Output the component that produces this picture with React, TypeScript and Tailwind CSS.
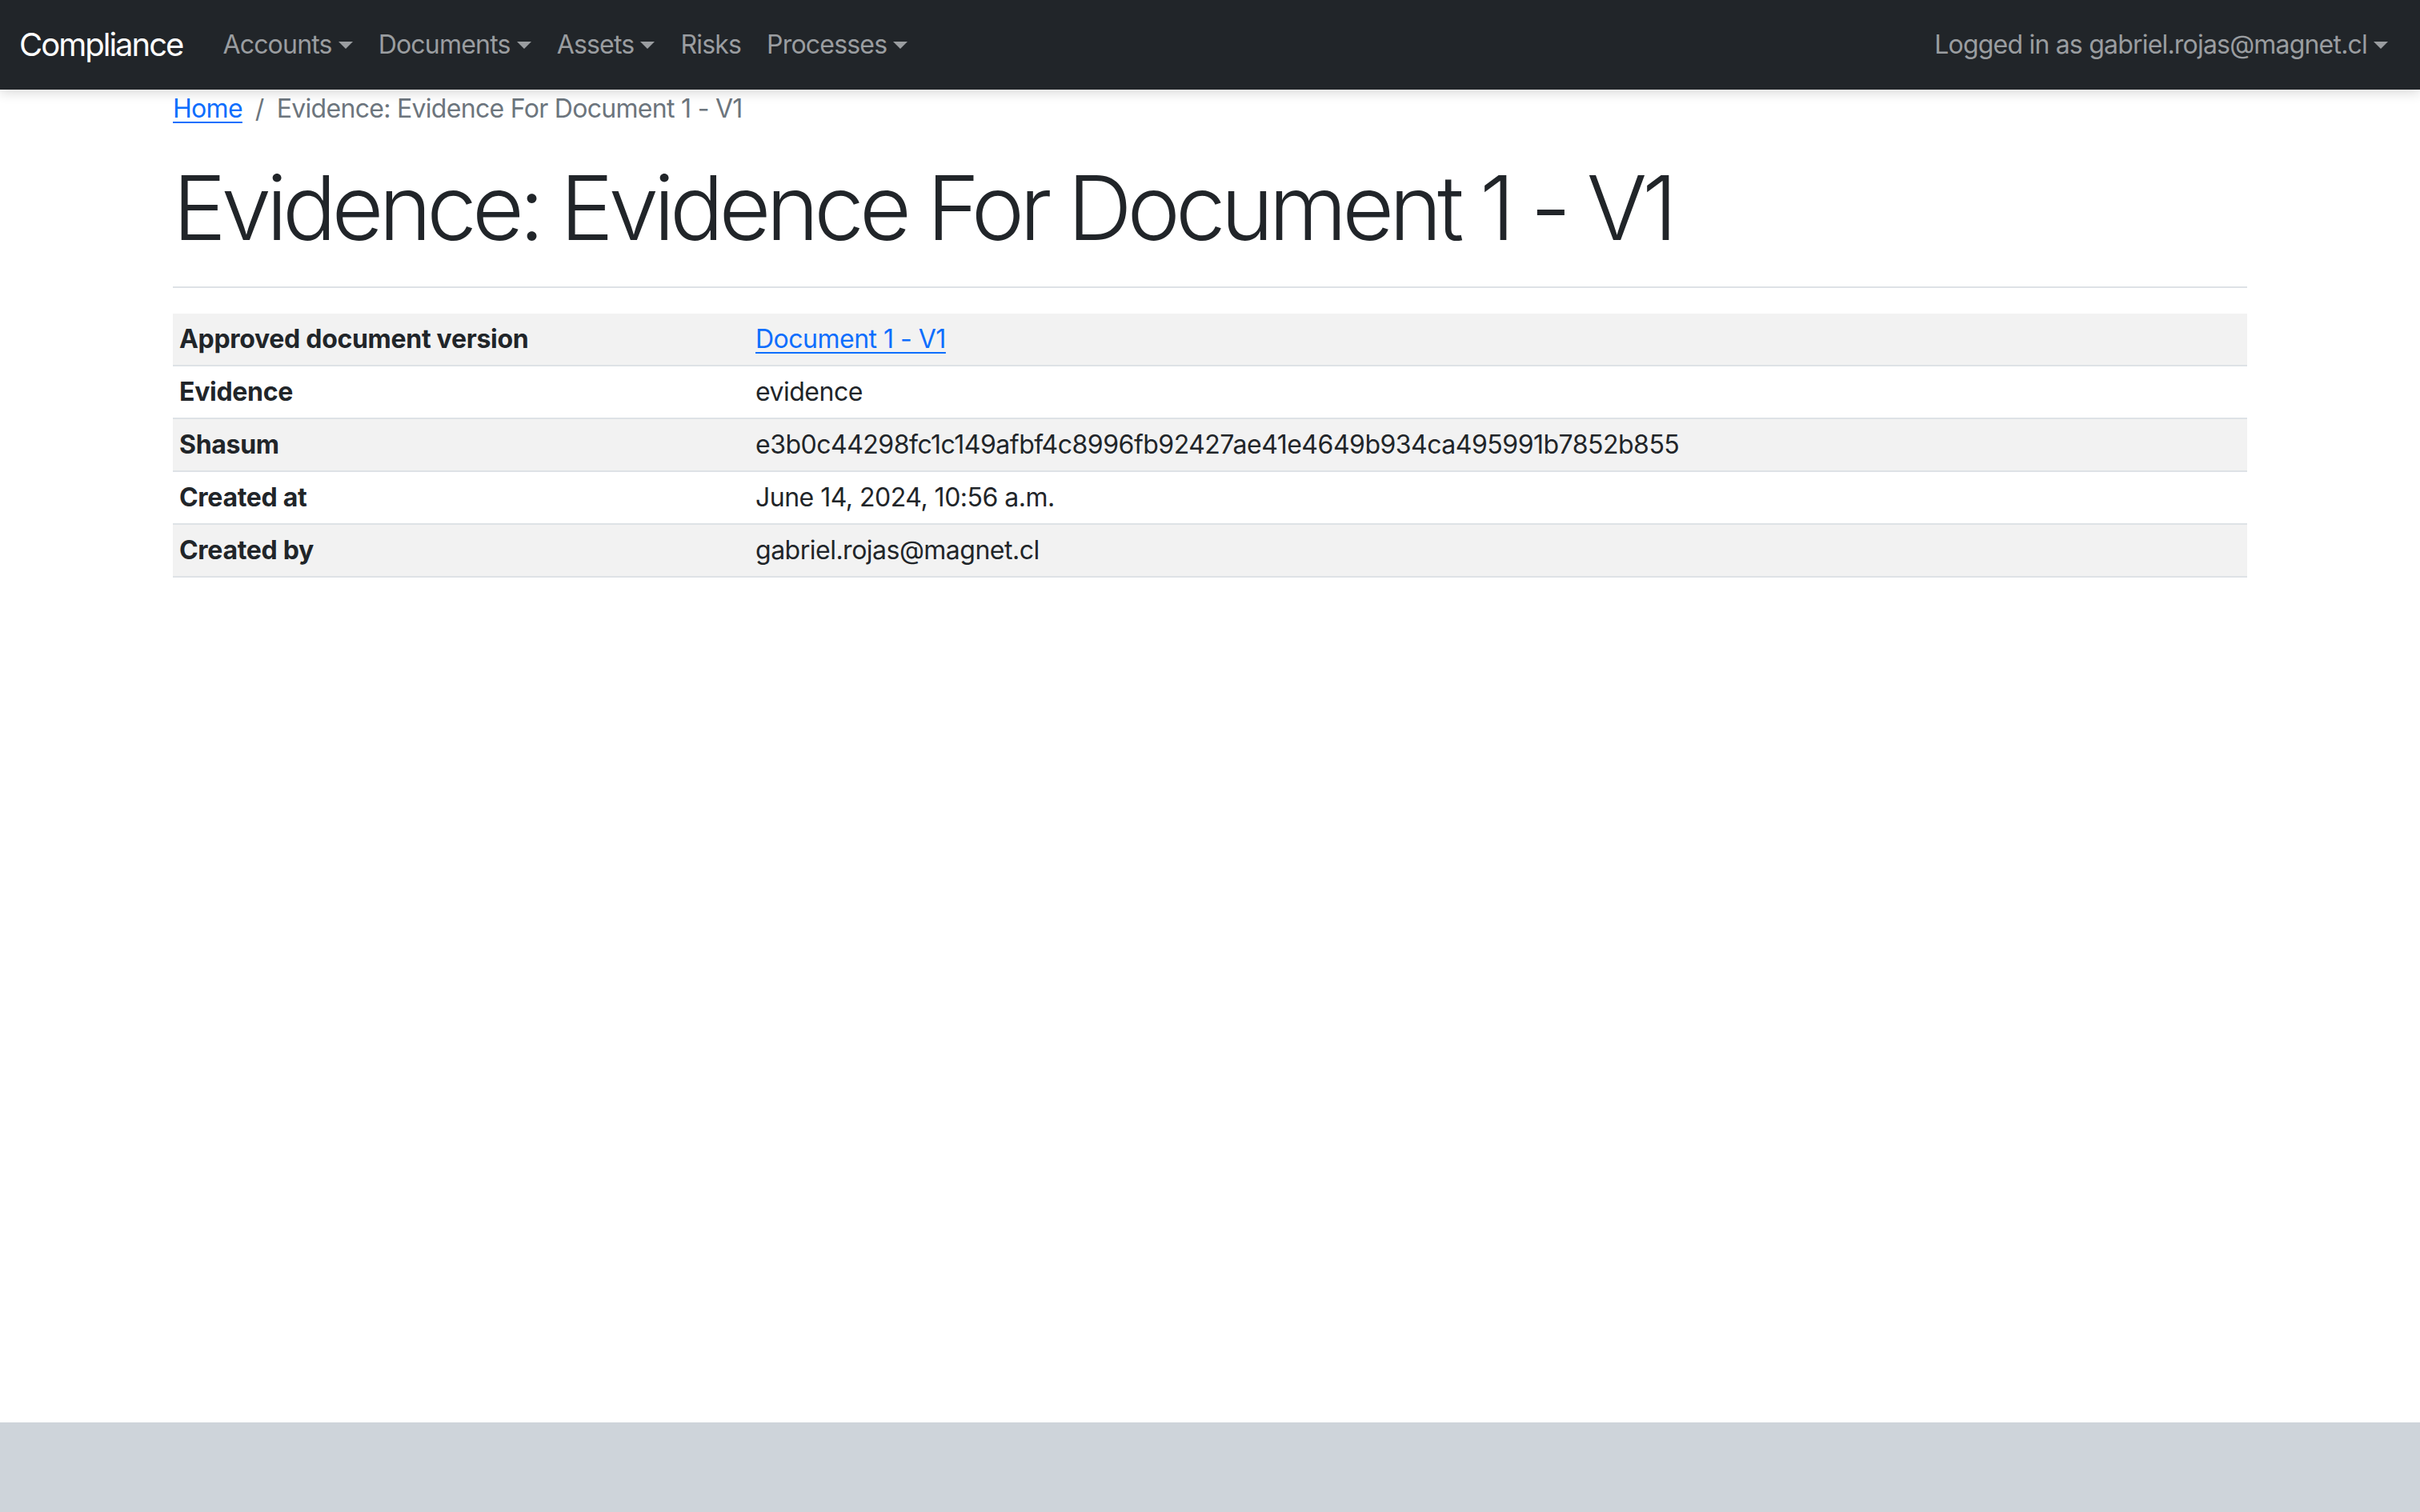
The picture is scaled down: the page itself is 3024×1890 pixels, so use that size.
import React from "react";

function Caret() {
  return (
    <span className="ml-[8px] inline-block h-0 w-0 border-x-[9.6px] border-t-[9.6px] border-x-transparent border-t-current align-[6px]" />
  );
}

function NavLink({ label, caret = true }: { label: string; caret?: boolean }) {
  return (
    <a className="flex items-center px-[16px] py-[16px] text-[32px] leading-[48px] tracking-[-0.8px] text-[#9a9da0]">
      {label}
      {caret && <Caret />}
    </a>
  );
}

const rows: { label: string; value: React.ReactNode }[] = [
  {
    label: "Approved document version",
    value: (
      <a className="text-[#0d6efd] underline decoration-[2px] underline-offset-[5px]">Document 1 - V1</a>
    ),
  },
  { label: "Evidence", value: "evidence" },
  { label: "Shasum", value: "e3b0c44298fc1c149afbf4c8996fb92427ae41e4649b934ca495991b7852b855" },
  { label: "Created at", value: "June 14, 2024, 10:56 a.m." },
  { label: "Created by", value: "gabriel.rojas@magnet.cl" },
];

export default function App() {
  return (
    <div
      className="flex min-h-screen flex-col bg-white text-[#212529]"
      style={{ fontFamily: "Inter, 'Noto Sans', 'Liberation Sans', sans-serif" }}
    >
      <nav className="relative z-10 flex h-[112px] items-center justify-between bg-[#212529] px-[24px] shadow-[0_4px_14px_rgba(0,0,0,0.15)]">
        <div className="flex items-center">
          <a className="mr-[34px] text-[40px] leading-[60px] tracking-[-2px] text-white">Compliance</a>
          <NavLink label="Accounts" />
          <NavLink label="Documents" />
          <NavLink label="Assets" />
          <NavLink label="Risks" caret={false} />
          <NavLink label="Processes" />
        </div>
        <div className="flex items-center">
          <NavLink label="Logged in as gabriel.rojas@magnet.cl" />
        </div>
      </nav>

      <main className="flex-1">
        <div className="mx-auto w-[2592px]">
          <ol className="mb-[32px] flex items-center text-[32px] leading-[48px] tracking-[-0.7px]">
            <li>
              <a className="text-[#0d6efd] underline decoration-[2px] underline-offset-[5px]">Home</a>
            </li>
            <li className="flex items-center text-[#6c757d]">
              <span className="px-[16px]">/</span>
              <span>Evidence: Evidence For Document 1 - V1</span>
            </li>
          </ol>
          <h1 className="text-[112px] font-light leading-[134px] tracking-[-6px]">
            Evidence: Evidence For Document 1 - V1
          </h1>
          <hr className="my-[32px] border-0 border-t-[2px] border-[#dee2e6]" />
          <table className="w-full border-collapse text-[32px] leading-[48px]">
            <tbody>
              {rows.map((r, i) => (
                <tr key={r.label} className={i % 2 === 0 ? "bg-[#f2f2f2]" : "bg-white"}>
                  <th className="w-[720px] border-b-[2px] border-[#dee2e6] px-[8px] py-[8px] text-left font-bold tracking-[-0.3px]">
                    {r.label}
                  </th>
                  <td className="border-b-[2px] border-[#dee2e6] px-[8px] py-[8px] text-left tracking-[-0.5px]">
                    {r.value}
                  </td>
                </tr>
              ))}
            </tbody>
          </table>
        </div>
      </main>

      <footer className="h-[112px] bg-[#ced4da]" />
    </div>
  );
}
